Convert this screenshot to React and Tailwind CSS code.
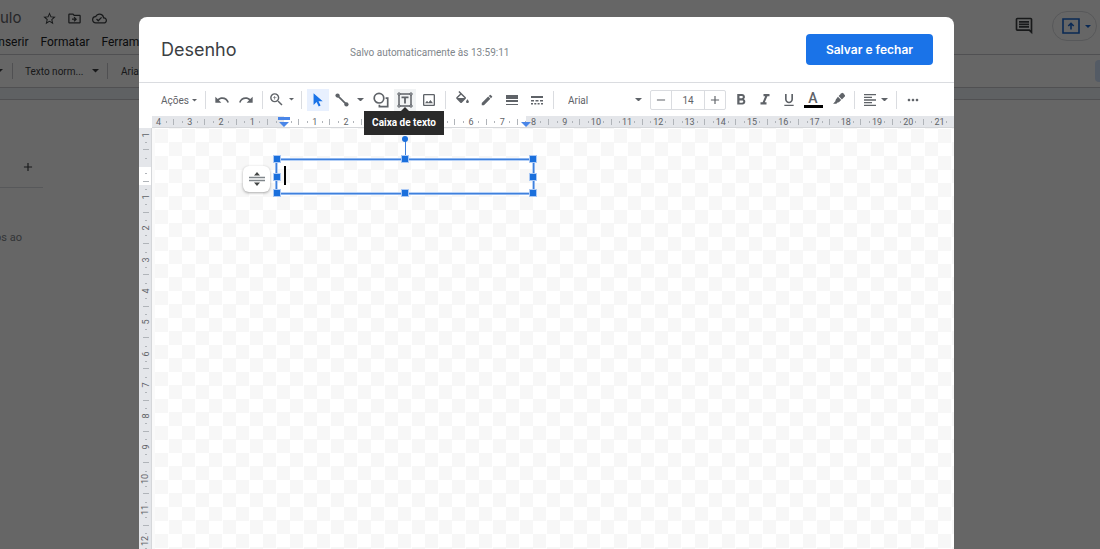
import { useState } from 'react';
import {
  MdAdd,
  MdEdit,
  MdFormatAlignLeft,
  MdFormatBold,
  MdFormatItalic,
  MdFormatUnderlined,
  MdMoreHoriz,
  MdOutlineCloudDone,
  MdOutlineDriveFileMove,
  MdOutlineImage,
  MdOutlineInsertComment,
  MdRedo,
  MdRemove,
  MdStarBorder,
  MdUndo,
  MdZoomIn,
} from 'react-icons/md';

const COLUMNS = Array.from({ length: 26 }, (_, i) => i - 4);
const ROWS = Array.from({ length: 14 }, (_, i) => i - 1);

function Caret({ className = 'w-[7px]' }) {
  return (
    <svg viewBox="0 0 8 4" className={`${className} shrink-0`} fill="currentColor" aria-hidden="true">
      <path d="M0 0h8L4 4z" />
    </svg>
  );
}

function ToolButton({ label, className = 'w-[22px] justify-center', children }) {
  return (
    <button type="button" aria-label={label} className={`flex h-[22px] shrink-0 items-center ${className}`}>
      {children}
    </button>
  );
}

function Divider() {
  return <span className="mx-[3px] h-[18px] w-px shrink-0 bg-[#dadce0]" />;
}

/* Icons that the Material set does not have in this shape */

function CursorIcon() {
  return (
    <svg viewBox="0 0 18 18" className="size-[16px]" fill="currentColor">
      <path d="M4 1.5v13l3.4-3.2 2.4 5 2.1-1-2.3-4.9h4.7z" />
    </svg>
  );
}

function LineIcon() {
  return (
    <svg viewBox="0 0 18 18" className="size-[16px]" fill="currentColor">
      <circle cx="4" cy="4" r="2.4" />
      <circle cx="14" cy="14" r="2.4" />
      <path d="M4 4l10 10" stroke="currentColor" strokeWidth="2" />
    </svg>
  );
}

function ShapeIcon() {
  return (
    <svg viewBox="0 0 18 18" className="size-[18px]" fill="none" stroke="currentColor" strokeWidth="1.7">
      <circle cx="7" cy="7.2" r="4.8" />
      <path d="M13.6 7.2h2.100v8.500H7.400v-2" />
    </svg>
  );
}

function TextBoxIcon() {
  return (
    <svg viewBox="0 0 18 18" className="size-[18px]" fill="none" stroke="currentColor">
      <path d="M3 3h12v12H3z" strokeWidth="1.500" />
      <path d="M5.500 6.400h7M9 6.400v6.200" strokeWidth="1.800" />
      <path d="M2 2h2v2H2zM14 2h2v2h-2zM2 14h2v2H2zM14 14h2v2h-2z" fill="#f1f3f4" strokeWidth="1" />
    </svg>
  );
}

function FillIcon() {
  return (
    <svg viewBox="0 0 24 24" className="size-[17px]" fill="currentColor">
      <path d="M16.56 8.94L7.62 0 6.21 1.41l2.38 2.38-5.15 5.15c-.59.59-.59 1.54 0 2.12l5.5 5.5c.29.29.68.44 1.06.44s.77-.15 1.06-.44l5.5-5.5c.59-.58.59-1.53 0-2.12zM5.21 10L10 5.21 14.79 10H5.21zM19 11.5s-2 2.17-2 3.5c0 1.1.9 2 2 2s2-.9 2-2c0-1.33-2-3.5-2-3.5z" />
    </svg>
  );
}

function WeightIcon() {
  return (
    <svg viewBox="0 0 12 12" className="size-3" fill="currentColor">
      <path d="M0 1h12v4H0zM0 6h12v2H0zM0 10h12v1H0z" />
    </svg>
  );
}

function DashIcon() {
  return (
    <svg viewBox="0 0 12 12" className="size-3" fill="currentColor">
      <path d="M0 2h12v2H0zM0 6h3v1.500H0zM4.500 6h3v1.500h-3zM9 6h3v1.500H9z" />
      <path d="M0 9h2v1.500H0zM3.300 9h2v1.500h-2zM6.600 9h2v1.500h-2zM10 9h2v1.500h-2z" />
    </svg>
  );
}

function MarkerIcon() {
  return (
    <svg viewBox="0 0 18 18" className="size-[14px]" fill="currentColor">
      <path d="M12.2 1.6a1.5 1.5 0 0 1 2.1 0l2.1 2.1a1.5 1.5 0 0 1 0 2.1l-3.7 3.7-4.2-4.2z" />
      <path d="M7.6 6.2l4.2 4.2-2.6 2.6c-.6.6-1.4.7-2.1.4L5.6 15H1.4l3.2-3.3c-.3-.7-.2-1.5.4-2.1z" />
    </svg>
  );
}

function PresentIcon() {
  return (
    <svg viewBox="0 0 18 16" className="h-4 w-[18px]" fill="none" stroke="currentColor" strokeWidth="1.600">
      <path d="M1 1h16v14H1z" />
      <path d="M9 11.500V6M6.300 8L9 5.300 11.700 8" />
    </svg>
  );
}

function DocumentPage() {
  return (
    <div className="h-full bg-white text-[#3c4043]">
      <header className="flex h-[55px] items-start justify-between border-b border-[#c7c9cc]">
        <div>
          <div className="flex h-9 items-center">
            <span className="w-[42px] font-['Inter'] text-[15px] text-[#5f6368]">ulo</span>
            <div className="flex gap-[10px] text-[15px]">
              <MdStarBorder />
              <MdOutlineDriveFileMove />
              <MdOutlineCloudDone />
            </div>
          </div>
          <nav className="-ml-[5px] flex gap-3 text-[12px] leading-3 text-[#202124]">
            <a href="#inserir">Inserir</a>
            <a href="#formatar">Formatar</a>
            <a href="#ferramentas">Ferramentas</a>
          </nav>
        </div>
        <div className="flex items-center gap-[18px] pt-[11px] pr-[3px]">
          <MdOutlineInsertComment className="size-5" />
          <button
            type="button"
            aria-label="Apresentar"
            className="flex h-[30px] w-[45px] items-center gap-[5px] rounded-full border border-[#dadce0] pl-[9px] text-[#1967d2]"
          >
            <PresentIcon />
            <Caret className="w-[6px]" />
          </button>
        </div>
      </header>

      <div className="flex h-[33px] items-center border-b border-[#c7c9cc] text-[10px]">
        <Caret className="-ml-1 w-[7px]" />
        <span className="ml-[9px] h-4 w-px bg-[#c7c9cc]" />
        <span className="ml-3 w-[67px]">Texto norm...</span>
        <Caret />
        <span className="mx-2 h-4 w-px bg-[#c7c9cc]" />
        <span className="ml-[5px]">Arial</span>
        <span className="ml-auto h-[22px] w-[5px] rounded-l-sm bg-[#d2e3fc]" />
      </div>
      <div className="h-3 border-b border-[#c7c9cc] bg-[#eef2f7]" />

      <aside className="w-[43px]">
        <div className="flex h-[88px] items-end justify-end border-b border-[#dadce0] pr-2 pb-[13px]">
          <MdAdd className="size-[14px]" />
        </div>
        <p className="flex justify-end pt-11 pr-[21px] text-[11px] leading-3 whitespace-nowrap text-[#80868b]">os ao</p>
      </aside>
    </div>
  );
}

function Toolbar({ font, setFont, size, setSize }) {
  return (
    <div
      role="toolbar"
      aria-label="Ferramentas de desenho"
      className="flex h-[33px] items-center gap-[2px] pl-[22px] text-[#5f6368]"
    >
      <button type="button" className="flex w-[39px] shrink-0 items-center gap-[3px] pt-[2px] text-[10px]">
        Ações
        <Caret className="w-[5px]" />
      </button>
      <Divider />
      <ToolButton label="Desfazer"><MdUndo className="size-4" /></ToolButton>
      <ToolButton label="Refazer"><MdRedo className="size-4" /></ToolButton>
      <Divider />
      <ToolButton label="Zoom" className="w-7 gap-1">
        <MdZoomIn className="size-[17px]" />
        <Caret className="w-[5px]" />
      </ToolButton>
      <Divider />
      <ToolButton label="Selecionar" className="w-[22px] justify-center bg-[#e8f0fe] text-[#1a73e8]">
        <CursorIcon />
      </ToolButton>
      <ToolButton label="Linha" className="w-[37px] gap-[7px] pl-[3px]">
        <LineIcon />
        <Caret />
      </ToolButton>
      <ToolButton label="Forma"><ShapeIcon /></ToolButton>
      <div className="relative">
        <ToolButton label="Caixa de texto" className="w-[22px] justify-center bg-[#f1f3f4]">
          <TextBoxIcon />
        </ToolButton>
        <div
          role="tooltip"
          className="absolute top-[22px] left-1/2 z-10 -ml-[41px] flex h-6 w-20 items-center justify-center bg-[#2a2a2a] text-[10px] font-bold whitespace-nowrap text-white"
        >
          Caixa de texto
          <span className="absolute -top-1 left-[37px] text-[#2a2a2a]">
            <Caret className="w-2 rotate-180" />
          </span>
        </div>
      </div>
      <ToolButton label="Imagem"><MdOutlineImage className="size-4" /></ToolButton>
      <Divider />
      <ToolButton label="Cor de preenchimento"><FillIcon /></ToolButton>
      <ToolButton label="Cor da borda" className="w-[23px] justify-center"><MdEdit className="size-[14px]" /></ToolButton>
      <ToolButton label="Espessura da borda" className="w-[23px] justify-center"><WeightIcon /></ToolButton>
      <ToolButton label="Traço da borda" className="w-[23px] justify-center"><DashIcon /></ToolButton>
      <Divider />
      <div className="relative flex w-[89px] shrink-0 items-center">
        <select
          aria-label="Fonte"
          value={font}
          onChange={(e) => setFont(e.target.value)}
          className="w-full appearance-none bg-transparent pt-[2px] pl-[9px] text-[10px] outline-none"
        >
          <option>Arial</option>
          <option>Roboto</option>
        </select>
        <span className="pointer-events-none absolute right-[6px]"><Caret /></span>
      </div>
      <div className="mr-[2px] flex h-5 w-[76px] shrink-0 items-center rounded-xs border border-[#dadce0]">
        <button type="button" aria-label="Diminuir" onClick={() => setSize(size - 1)} className="flex w-5 justify-center">
          <MdRemove className="size-[14px]" />
        </button>
        <input
          aria-label="Tamanho da fonte"
          value={size}
          onChange={(e) => setSize(Number(e.target.value) || 1)}
          className="h-full w-[34px] border-x border-[#dadce0] pt-px text-center text-[10px] outline-none"
        />
        <button type="button" aria-label="Aumentar" onClick={() => setSize(size + 1)} className="flex w-5 justify-center">
          <MdAdd className="size-[14px]" />
        </button>
      </div>
      <ToolButton label="Negrito"><MdFormatBold className="size-[18px]" /></ToolButton>
      <ToolButton label="Itálico"><MdFormatItalic className="size-[18px]" /></ToolButton>
      <ToolButton label="Sublinhado"><MdFormatUnderlined className="size-4" /></ToolButton>
      <ToolButton label="Cor do texto" className="w-[22px] flex-col justify-center">
        <span className="text-[14px] leading-[14px] font-medium">A</span>
        <span className="h-[3px] w-[19px] bg-black" />
      </ToolButton>
      <ToolButton label="Cor de destaque" className="w-[23px] justify-center pb-[2px] pl-[2px]"><MarkerIcon /></ToolButton>
      <Divider />
      <ToolButton label="Alinhar" className="w-[31px] gap-[3px] pl-[2px]">
        <MdFormatAlignLeft className="size-4" />
        <Caret />
      </ToolButton>
      <Divider />
      <ToolButton label="Mais"><MdMoreHoriz className="size-4" /></ToolButton>
    </div>
  );
}

function HorizontalRuler() {
  return (
    <div className="relative ml-[13px] h-3 overflow-hidden border-b border-[#d5d7da] bg-[#e4e6ea]">
      <div className="absolute inset-y-0 left-[132px] w-[242px] bg-white" />
      <div className="relative -mr-px -ml-[9px] flex h-full text-[9px] leading-3 text-[#5f6368]">
        {COLUMNS.map((n) => (
          <div key={n} className="flex min-w-0 flex-1 items-center justify-between">
            <span className="w-px" />
            <span className="flex items-center">
              <span className="h-[2px] w-px bg-[#b0b4b9]" />
              <span className="w-[14px] text-center">{n === 0 ? '' : Math.abs(n)}</span>
              <span className="h-[2px] w-px bg-[#b0b4b9]" />
            </span>
            <span className="h-[6px] w-px bg-[#b0b4b9]" />
          </div>
        ))}
      </div>
      <svg viewBox="0 0 12 11" className="absolute top-px left-[126px] w-3" fill="#4a86e8">
        <path d="M0 0h12v3H0zM1 5h10l-5 5z" />
      </svg>
      <svg viewBox="0 0 10 5" className="absolute top-[6px] left-[369px] w-[10px]" fill="#4a86e8">
        <path d="M0 0h10L5 5z" />
      </svg>
    </div>
  );
}

function VerticalRuler() {
  return (
    <div className="relative w-[13px] shrink-0 overflow-hidden border-r border-[#d5d7da] bg-[#e4e6ea]">
      <div className="absolute inset-x-0 top-[39px] h-[18px] bg-white" />
      <div className="relative -mt-[9px] flex h-[438px] flex-col pl-px text-[9px] text-[#5f6368]">
        {ROWS.map((n) => (
          <div key={n} className="flex min-h-0 flex-1 flex-col items-center justify-between">
            <span className="h-px" />
            <span className="flex flex-col items-center">
              <span className="h-px w-[2px] bg-[#b0b4b9]" />
              <span className="flex size-[14px] items-center justify-center">
                <span className="-rotate-90 leading-[10px]">{n === 0 ? '' : Math.abs(n)}</span>
              </span>
              <span className="h-px w-[2px] bg-[#b0b4b9]" />
            </span>
            <span className="h-px w-[6px] bg-[#b0b4b9]" />
          </div>
        ))}
      </div>
    </div>
  );
}

const handles = [
  '-top-1 -left-[3px]',
  '-top-1 left-1/2 -ml-[3px]',
  '-top-1 -right-[3px]',
  'top-1/2 -left-[3px] -mt-[3px]',
  'top-1/2 -right-[3px] -mt-[3px]',
  '-bottom-[3px] -left-[3px]',
  '-bottom-[3px] left-1/2 -ml-[3px]',
  '-bottom-[3px] -right-[3px]',
];

function TextBox() {
  return (
    <div className="absolute top-[31px] left-[121px] h-[35px] w-[258px] border border-[#3f80dc] shadow-[inset_0_0_0_1px_#b5d0f6] outline outline-[#8fb7f0]">
      <textarea aria-label="Texto" className="block h-full w-full resize-none bg-transparent caret-transparent outline-none" />
      <span className="absolute top-[6px] left-[7px] h-[19px] w-[2px] bg-black" />
      <span className="absolute -top-5 left-1/2 h-5 w-px bg-[#3f80dc]" />
      <span className="absolute -top-6 left-1/2 -ml-[3px] size-[6px] rounded-full bg-[#1a6fdc]" />
      {handles.map((pos) => (
        <span key={pos} className={`absolute size-[6px] bg-[#1a6fdc] outline outline-[#a9c8f5] ${pos}`} />
      ))}
    </div>
  );
}

function DrawingCanvas() {
  return (
    <div className="relative min-w-0 flex-1 overflow-hidden border-l-[3px] border-[#fafafa] bg-white bg-[conic-gradient(#fff_25%,#f7f7f7_0_50%,#fff_0_75%,#f7f7f7_0)] bg-size-[27px_27px] bg-position-[0px_1px]">
      <TextBox />
      <button
        type="button"
        aria-label="Espaçamento"
        className="absolute top-[38px] left-[88px] flex h-[26px] w-[27px] items-center justify-center rounded-md bg-white text-[#444746] shadow-[0_1px_3px_rgba(0,0,0,0.35)]"
      >
        <svg viewBox="0 0 16 16" className="size-4" fill="currentColor">
          <path d="M5 4.500h6L8 1zM5 11.500h6L8 15z" />
          <path d="M0 5.800h16v1.500H0zM0 8.800h16v1.500H0z" fill="#80868b" />
        </svg>
      </button>
    </div>
  );
}

export default function App() {
  const [font, setFont] = useState('Arial');
  const [size, setSize] = useState(14);

  return (
    <div className="relative h-screen overflow-hidden font-['Roboto',sans-serif]">
      <DocumentPage />

      <div className="absolute inset-0 flex bg-black/60 pt-[17px] pr-[146px] pl-[139px]">
        <div role="dialog" aria-label="Desenho" className="flex min-w-0 flex-1 flex-col overflow-hidden rounded-t-lg bg-white">
          <div className="flex h-[66px] shrink-0 items-center border-b border-[#dadce0] pr-[21px] pl-[22px]">
            <h1 className="w-[189px] font-['Inter'] text-[18px] text-[#3c4043]">Desenho</h1>
            <span className="pt-[6px] text-[10px] text-[#80868b]">Salvo automaticamente às 13:59:11</span>
            <button
              type="button"
              className="ml-auto h-[31px] w-[127px] rounded-sm bg-[#1a73e8] font-['Inter'] text-[12px] font-semibold text-white"
            >
              Salvar e fechar
            </button>
          </div>
          <Toolbar font={font} setFont={setFont} size={size} setSize={setSize} />
          <HorizontalRuler />
          <div className="flex min-h-0 flex-1">
            <VerticalRuler />
            <DrawingCanvas />
          </div>
        </div>
      </div>
    </div>
  );
}
